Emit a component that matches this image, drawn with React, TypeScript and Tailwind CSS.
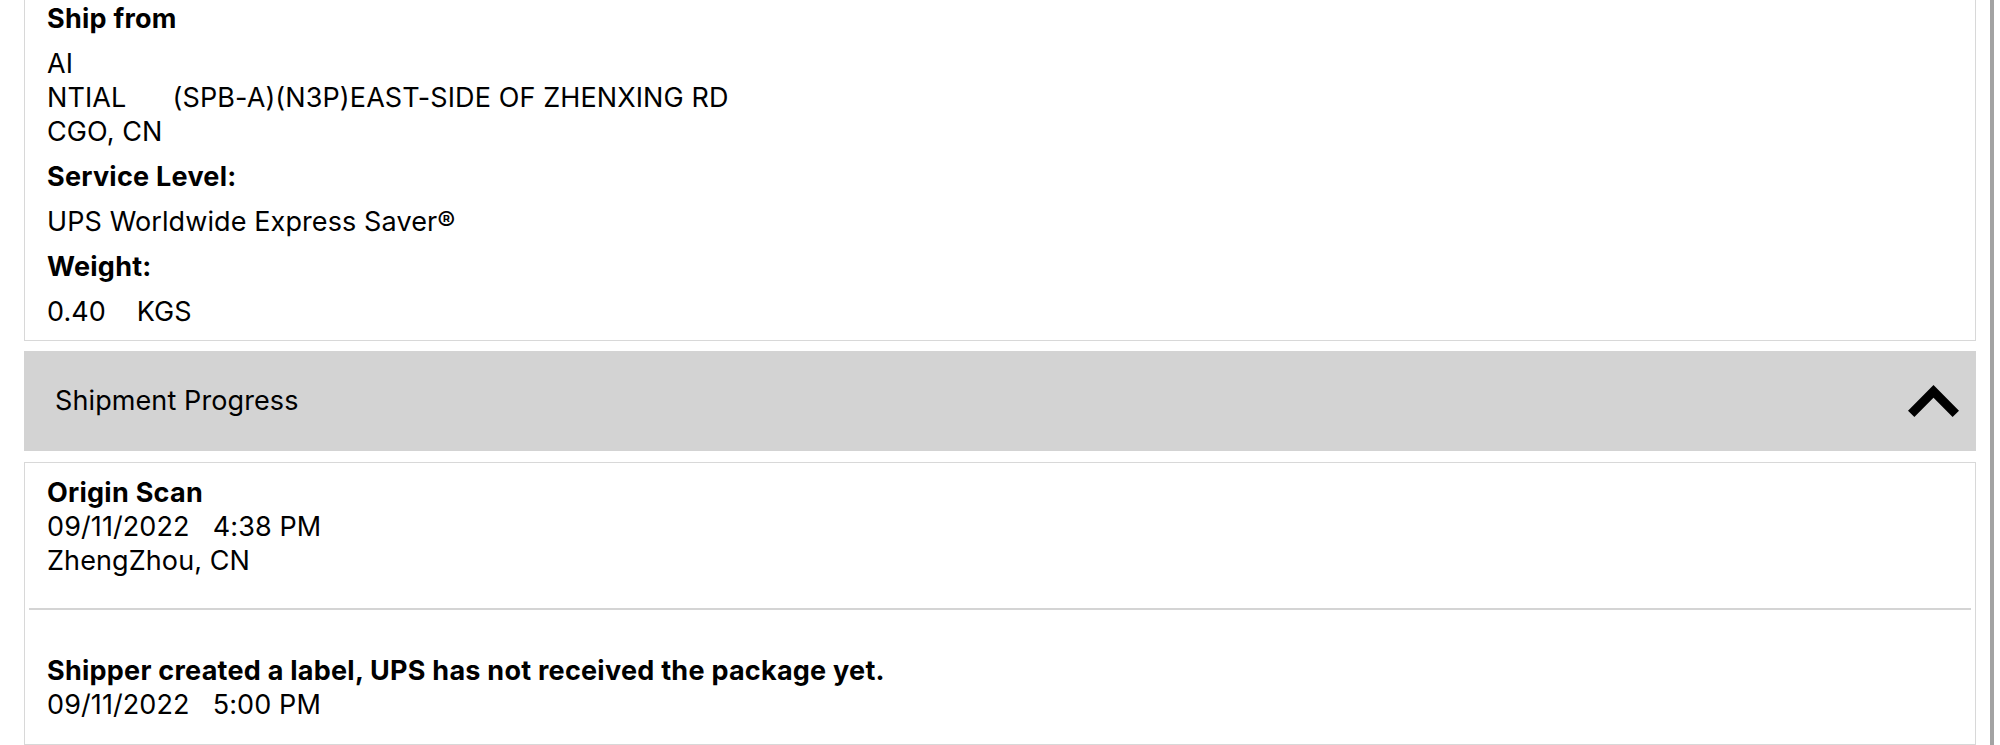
import React from 'react'

const font = { fontFamily: 'Inter, "Noto Sans", sans-serif' }

const Field = ({ label, children }: { label: string; children: React.ReactNode }) => (
    <>
        <div className="font-bold tracking-[0.25px]">{label}</div>
        <div>{children}</div>
    </>
)

const ChevronUp = () => (
    <svg width="52" height="33" viewBox="0 0 52 33">
        <polyline
            points="3.2,28.8 25.5,6.4 47.8,28.8"
            fill="none"
            stroke="#000"
            strokeWidth="9"
            strokeLinejoin="miter"
            strokeLinecap="butt"
        />
    </svg>
)

export default function App() {
    return (
        <div className="flex h-[745px] w-[2000px] overflow-hidden bg-white text-[27px] leading-[34px] tracking-[0.1px] text-black" style={font}>
            <div className="ml-[24px] flex w-[1952px] flex-col">
                {/* shipment details */}
                <div className="flex flex-col gap-[11px] border-x border-b border-[#d8d8d8] pb-[11px] pl-[22px] pt-[2px]">
                    <Field label="Ship from">
                        <div>AI</div>
                        <div className="whitespace-pre">NTIAL      (SPB-A)(N3P)EAST-SIDE OF ZHENXING RD</div>
                        <div>CGO, CN</div>
                    </Field>
                    <Field label="Service Level:">UPS Worldwide Express Saver®</Field>
                    <Field label="Weight:">
                        <span className="whitespace-pre">0.40    KGS</span>
                    </Field>
                </div>

                {/* progress header */}
                <div className="mt-[10px] flex h-[100px] items-center justify-between bg-[#d3d3d3] pl-[31px] pr-[16px]">
                    <span>Shipment Progress</span>
                    <ChevronUp />
                </div>

                {/* progress events */}
                <div className="mt-[11px] flex flex-1 flex-col border border-[#d8d8d8]">
                    <div className="pb-[30px] pl-[22px] pt-[13px]">
                        <div className="font-bold tracking-[0.25px]">Origin Scan</div>
                        <div className="whitespace-pre">09/11/2022   4:38 PM</div>
                        <div>ZhengZhou, CN</div>
                    </div>
                    <div className="mx-[4px] h-[2px] bg-[#d4d4d4]" />
                    <div className="pl-[22px] pt-[44px]">
                        <div className="font-bold tracking-[0.25px]">Shipper created a label, UPS has not received the package yet.</div>
                        <div className="whitespace-pre">09/11/2022   5:00 PM</div>
                    </div>
                </div>
            </div>
            <div className="ml-[14px] w-[4px] bg-[#a3a3a3]" />
        </div>
    )
}
